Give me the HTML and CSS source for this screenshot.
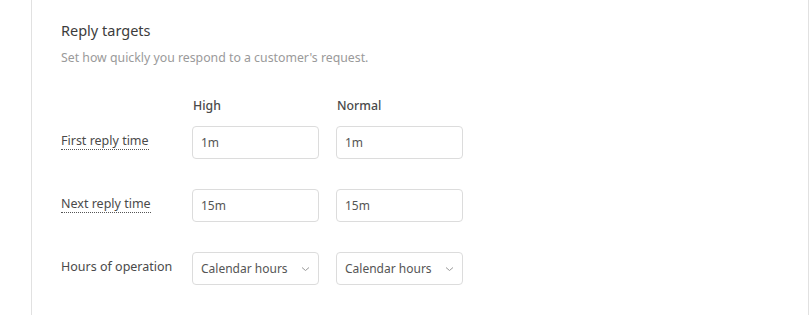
FILE: index.html
```html
<!DOCTYPE html>
<html lang="en">
<head>
    <meta charset="UTF-8">
    <meta name="viewport" content="width=device-width, initial-scale=1.0">
    <title>Reply targets</title>
    <link rel="stylesheet" href="styles.css">
</head>
<body>

<div class="card">
    <h2 class="title">Reply targets</h2>
    <p class="subtitle">Set how quickly you respond to a customer's request.</p>

    <div class="targets-head">
        <span></span>
        <span class="col-head">High</span>
        <span class="col-head">Normal</span>
    </div>

    <div class="targets">
        <span class="row-label"><span class="hint">First reply time</span></span>
        <input type="text" class="field" value="1m">
        <input type="text" class="field" value="1m">

        <span class="row-label"><span class="hint">Next reply time</span></span>
        <input type="text" class="field" value="15m">
        <input type="text" class="field" value="15m">

        <span class="row-label">Hours of operation</span>
        <div class="select">
            <span>Calendar hours</span>
            <svg class="chevron" width="9" height="6" viewBox="0 0 9 6"><path d="M1 1.5 L4.5 4.5 L8 1.5" fill="none" stroke="#999" stroke-width="1"/></svg>
        </div>
        <div class="select">
            <span>Calendar hours</span>
            <svg class="chevron" width="9" height="6" viewBox="0 0 9 6"><path d="M1 1.5 L4.5 4.5 L8 1.5" fill="none" stroke="#999" stroke-width="1"/></svg>
        </div>
    </div>
</div>

</body>
</html>
```

FILE: styles.css
```css
body {
    margin: 0;
    padding: 0;
    background-color: #fff;
    font-family: 'Noto Sans', 'Open Sans', sans-serif;
    color: #555;
    overflow: hidden;
}
.card {
    margin-left: 31px;
    width: 778px;
    min-height: 315px;
    border-left: 1px solid #e1e1e1;
    border-right: 1px solid #e1e1e1;
    padding: 20px 29px 0;
    box-sizing: border-box;
}
.title {
    margin: 0;
    font-size: 14.5px;
    line-height: 20px;
    font-weight: 400;
    color: #3c3c3c;
}
.subtitle {
    margin: 9px 0 0;
    font-size: 12.3px;
    line-height: 18px;
    color: #9a9a9a;
}
.targets-head, .targets {
    display: grid;
    grid-template-columns: 114px 127px 127px;
    column-gap: 17px;
    align-items: center;
}
.targets-head {
    margin-top: 30px;
    margin-bottom: 12px;
    line-height: 17px;
}
.targets {
    grid-auto-rows: 33px;
    row-gap: 30px;
}
.col-head {
    font-size: 12.3px;
    font-weight: 500;
    color: #4a4a4a;
    padding-left: 1px;
}
.row-label {
    font-size: 12.5px;
    color: #4a4a4a;
    white-space: nowrap;
    margin-bottom: 4px;
}
.hint {
    border-bottom: 1px dotted #555;
}
.field, .select {
    height: 33px;
    box-sizing: border-box;
    border: 1px solid #dcdcdc;
    border-radius: 4px;
    padding: 0 8px;
    font-family: inherit;
    font-size: 12px;
    color: #555;
    background: #fff;
    width: 100%;
}
.select {
    display: flex;
    align-items: center;
    justify-content: space-between;
    padding-right: 8px;
}
.chevron {
    display: block;
}
```
